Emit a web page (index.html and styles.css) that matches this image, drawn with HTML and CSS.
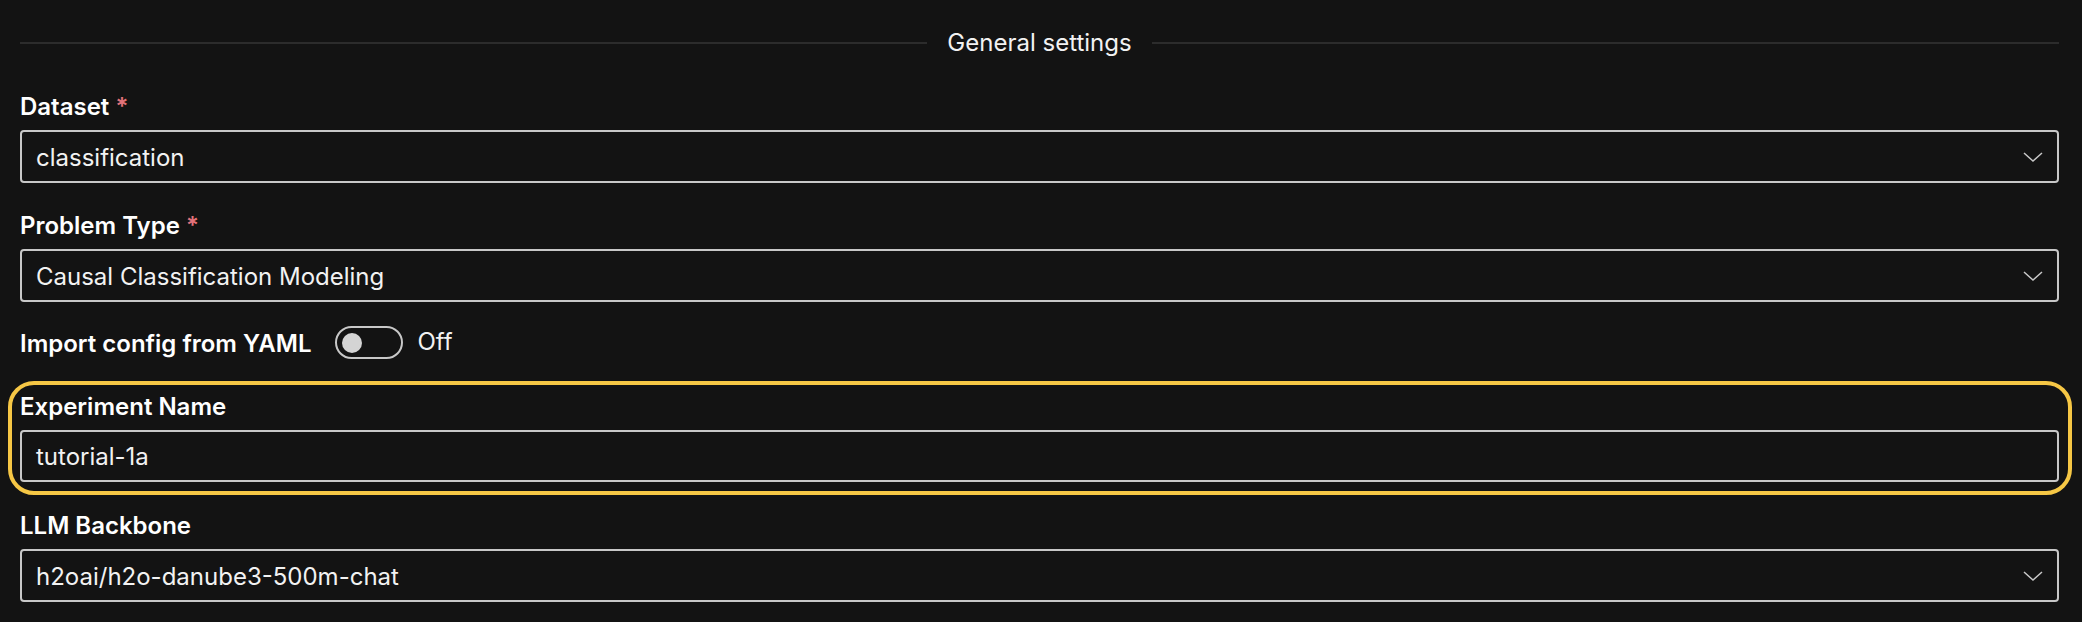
FILE: index.html
```html
<!DOCTYPE html>
<html lang="en">
<head>
<meta charset="utf-8">
<title>General settings</title>
<link rel="stylesheet" href="styles.css">
</head>
<body>
<div class="page">
  <div class="section-title">
    <span class="rule"></span>
    <span class="title-text">General settings</span>
    <span class="rule"></span>
  </div>

  <div class="field">
    <div class="label">Dataset <span class="req">*</span></div>
    <div class="input select">
      <span class="value">classification</span>
      <svg class="chev" viewBox="0 0 20 10" width="20" height="10"><path d="M1 1 L10 9 L19 1" fill="none" stroke="#c9c9c9" stroke-width="1.5"/></svg>
    </div>
  </div>

  <div class="field">
    <div class="label">Problem Type <span class="req">*</span></div>
    <div class="input select">
      <span class="value">Causal Classification Modeling</span>
      <svg class="chev" viewBox="0 0 20 10" width="20" height="10"><path d="M1 1 L10 9 L19 1" fill="none" stroke="#c9c9c9" stroke-width="1.5"/></svg>
    </div>
  </div>

  <div class="toggle-row">
    <span class="label inline">Import config from YAML</span>
    <span class="toggle"><span class="knob"></span></span>
    <span class="toggle-text">Off</span>
  </div>

  <div class="highlight">
    <div class="label">Experiment Name</div>
    <div class="input">
      <span class="value">tutorial-1a</span>
    </div>
  </div>

  <div class="field after-highlight">
    <div class="label">LLM Backbone</div>
    <div class="input select">
      <span class="value">h2oai/h2o-danube3-500m-chat</span>
      <svg class="chev" viewBox="0 0 20 10" width="20" height="10"><path d="M1 1 L10 9 L19 1" fill="none" stroke="#c9c9c9" stroke-width="1.5"/></svg>
    </div>
  </div>
</div>
</body>
</html>
```
FILE: styles.css
```css
html, body {
  margin: 0;
  padding: 0;
  background: #131313;
  height: 100%;
  overflow: hidden;
}

body {
  font-family: Inter, "Noto Sans", sans-serif;
  color: #ffffff;
}

.page {
  padding: 28px 23px 0 20px;
}

.section-title {
  display: flex;
  align-items: center;
  gap: 20px;
  height: 30px;
}

.rule {
  flex: 1;
  height: 2px;
  background: #2c2c2c;
}

.title-text {
  font-size: 24px;
  line-height: 30px;
  color: #f2f2f2;
}

.field {
  margin-top: 34px;
}

.field + .field {
  margin-top: 28px;
}

.label {
  font-size: 24px;
  line-height: 30px;
  font-weight: 600;
  color: #ffffff;
}

.req {
  color: #e2727a;
}

.input {
  margin-top: 8px;
  height: 53px;
  box-sizing: border-box;
  border: 2px solid #c8c8c8;
  border-radius: 4px;
  display: flex;
  align-items: center;
  padding: 0 14px 0 14px;
  font-size: 24px;
  color: #f2f2f2;
}

.value {
  flex: 1;
  line-height: 30px;
  padding-top: 2px;
}

.chev {
  display: block;
}

.toggle-row {
  display: flex;
  align-items: center;
  margin-top: 24px;
  height: 33px;
}

.label.inline {
  margin-right: 24px;
  padding-top: 3px;
}

.toggle {
  width: 68px;
  height: 33px;
  box-sizing: border-box;
  border: 2px solid #c8c8c8;
  border-radius: 17px;
  display: flex;
  align-items: center;
  padding-left: 5px;
}

.knob {
  width: 20px;
  height: 20px;
  border-radius: 50%;
  background: #d4d4d4;
}

.toggle-text {
  margin-left: 14px;
  font-size: 24px;
  line-height: 30px;
  color: #f2f2f2;
  margin-top: -1px;
}

.highlight {
  margin: 22px -13px 0 -12px;
  border: 4px solid #f6c745;
  border-radius: 26px;
  padding: 7px 9px 9px 8px;
}

.highlight .input {
  height: 52px;
}

.field.after-highlight {
  margin-top: 16px;
}
```
